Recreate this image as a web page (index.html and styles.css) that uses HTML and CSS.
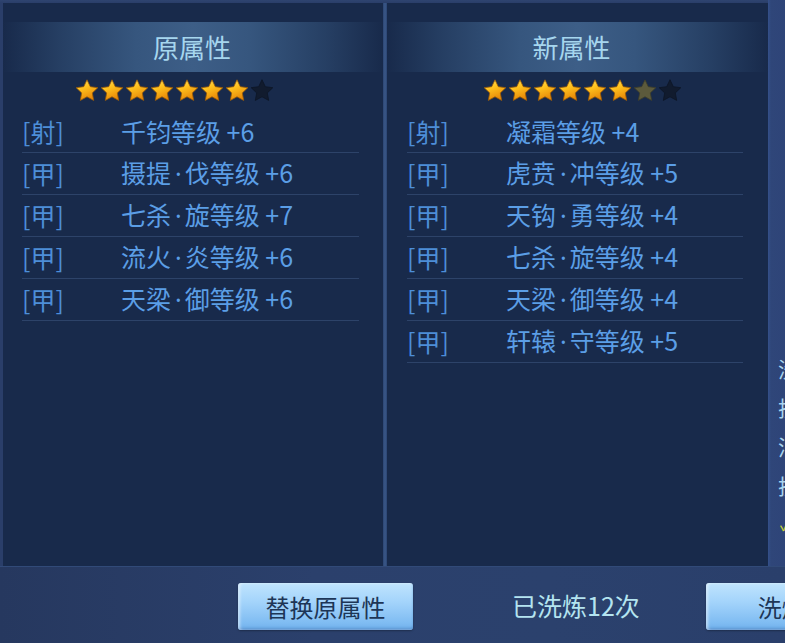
FILE: index.html
```html
<!DOCTYPE html>
<html lang="zh">
<head>
<meta charset="utf-8">
<link rel="stylesheet" href="styles.css">
</head>
<body>
<svg class="defs" width="0" height="0" aria-hidden="true">
  <defs>
    <linearGradient id="gold" x1="0" y1="0" x2="0.4" y2="1">
      <stop offset="0" stop-color="#ffe36a"/>
      <stop offset="0.45" stop-color="#ffc21e"/>
      <stop offset="1" stop-color="#e88a08"/>
    </linearGradient>
    <symbol id="star" viewBox="0 0 24 24">
      <path d="M12 0.8l3.3 6.9 7.5 1-5.5 5.2 1.4 7.5L12 17.8l-6.7 3.6 1.4-7.5L1.2 8.7l7.5-1z"/>
    </symbol>
  </defs>
</svg>
<div class="screen">
  <div class="top">
    <section class="panel panel-old">
      <div class="head"><span class="title">原属性</span></div>
      <div class="stars">
        <svg class="star gold"><use href="#star"/></svg>
        <svg class="star gold"><use href="#star"/></svg>
        <svg class="star gold"><use href="#star"/></svg>
        <svg class="star gold"><use href="#star"/></svg>
        <svg class="star gold"><use href="#star"/></svg>
        <svg class="star gold"><use href="#star"/></svg>
        <svg class="star gold"><use href="#star"/></svg>
        <svg class="star empty"><use href="#star"/></svg>
      </div>
      <ul class="rows">
        <li class="row"><span class="tag">[射]</span><span class="name">千钧等级 +6</span></li>
        <li class="row"><span class="tag">[甲]</span><span class="name">摄提<span class="dot">·</span>伐等级 +6</span></li>
        <li class="row"><span class="tag">[甲]</span><span class="name">七杀<span class="dot">·</span>旋等级 +7</span></li>
        <li class="row"><span class="tag">[甲]</span><span class="name">流火<span class="dot">·</span>炎等级 +6</span></li>
        <li class="row"><span class="tag">[甲]</span><span class="name">天梁<span class="dot">·</span>御等级 +6</span></li>
      </ul>
    </section>
    <div class="divider"></div>
    <section class="panel panel-new">
      <div class="head"><span class="title">新属性</span></div>
      <div class="stars">
        <svg class="star gold"><use href="#star"/></svg>
        <svg class="star gold"><use href="#star"/></svg>
        <svg class="star gold"><use href="#star"/></svg>
        <svg class="star gold"><use href="#star"/></svg>
        <svg class="star gold"><use href="#star"/></svg>
        <svg class="star gold"><use href="#star"/></svg>
        <svg class="star dim"><use href="#star"/></svg>
        <svg class="star empty"><use href="#star"/></svg>
      </div>
      <ul class="rows">
        <li class="row"><span class="tag">[射]</span><span class="name">凝霜等级 +4</span></li>
        <li class="row"><span class="tag">[甲]</span><span class="name">虎贲<span class="dot">·</span>冲等级 +5</span></li>
        <li class="row"><span class="tag">[甲]</span><span class="name">天钩<span class="dot">·</span>勇等级 +4</span></li>
        <li class="row"><span class="tag">[甲]</span><span class="name">七杀<span class="dot">·</span>旋等级 +4</span></li>
        <li class="row"><span class="tag">[甲]</span><span class="name">天梁<span class="dot">·</span>御等级 +4</span></li>
        <li class="row"><span class="tag">[甲]</span><span class="name">轩辕<span class="dot">·</span>守等级 +5</span></li>
      </ul>
    </section>
    <aside class="side">
      <p class="side-line">洗炼可改变属性</p>
      <p class="side-line">技能等级随机</p>
      <p class="side-line">消耗洗炼石</p>
      <p class="side-line">技能替换生效</p>
      <p class="side-line check">✓</p>
    </aside>
  </div>
  <div class="bottom">
    <button class="btn btn-replace">替换原属性</button>
    <span class="count">已洗炼12次</span>
    <button class="btn btn-wash">洗炼属性</button>
  </div>
</div>
</body>
</html>
```

FILE: styles.css
```css
* { box-sizing: border-box; }
html, body { margin: 0; padding: 0; }
body {
  width: 785px;
  height: 643px;
  overflow: hidden;
  background: #2a3e69;
  font-family: "Noto Sans CJK SC", "Noto Sans", sans-serif;
}
.defs { position: absolute; width: 0; height: 0; }
.screen {
  width: 785px;
  height: 643px;
  display: flex;
  flex-direction: column;
  background: #2a3e69;
  overflow: hidden;
}
.top {
  height: 566px;
  display: flex;
  padding: 3px 0 0 3px;
  background: linear-gradient(180deg, #2e4470 0, #2a3e69 3px);
}
.panel {
  height: 563px;
  background: #182a4b;
  display: flex;
  flex-direction: column;
}
.panel-old { width: 380px; }
.panel-new { width: 381px; }
.divider {
  width: 4px;
  height: 563px;
  background: linear-gradient(90deg, #2c4573, #3a5888 50%, #2c4573);
}
.head {
  margin-top: 19px;
  height: 50px;
  display: flex;
  align-items: center;
  justify-content: center;
  background: linear-gradient(90deg, rgba(40,66,104,0) 0%, rgba(44,72,110,0.7) 15%, #36567e 35%, #3d5e87 50%, #36567e 65%, rgba(44,72,110,0.7) 85%, rgba(40,66,104,0) 100%);
}
.title {
  font-size: 26px;
  color: #a6d6ee;
  line-height: 1;
}
.panel-old .title { margin-left: -2px; }
.panel-new .title { margin-left: -12px; }
.stars {
  margin-top: 7px;
  height: 24px;
  display: flex;
  gap: 1px;
}
.panel-old .stars { padding-left: 72px; }
.panel-new .stars { padding-left: 96px; }
.star {
  width: 24px;
  height: 24px;
  flex: none;
}
.star.gold { fill: url(#gold); stroke: #9a5a06; stroke-width: 0.8; }
.star.dim { fill: #5c5a3c; stroke: #3e3e2a; stroke-width: 0.8; }
.star.empty { fill: #111b2e; stroke: #0d1526; stroke-width: 0.8; }
.rows {
  list-style: none;
  margin: 8px 0 0 0;
  padding: 0 24px 0 19px;
}
.panel-new .rows { padding: 0 25px 0 20px; }
.row {
  height: 42px;
  display: flex;
  align-items: center;
  border-bottom: 1px solid #2d4369;
  padding-bottom: 1px;
}
.tag {
  width: 99px;
  font-size: 25px;
  color: #4d8ed8;
  line-height: 1;
}
.name {
  font-size: 25px;
  color: #5b9ee6;
  line-height: 1;
  white-space: nowrap;
}
.dot {
  font-family: "Noto Sans", sans-serif;
  margin: 0 3px 0 4px;
}
.side {
  flex: 1;
  margin-top: -3px;
  height: 566px;
  background: linear-gradient(90deg, #34508a 0, #2f4679 3px, #2e4478);
  overflow: hidden;
  padding: 358px 0 0 10px;
}
.side-line {
  margin: 0 0 18px 0;
  font-size: 21px;
  line-height: 21px;
  color: #a9d4ee;
  white-space: nowrap;
}
.side-line.check { color: #c8d23a; font-size: 16px; margin-left: 2px; }
.bottom {
  height: 77px;
  display: flex;
  align-items: center;
  padding-left: 238px;
  overflow: hidden;
  background: linear-gradient(90deg, #26385f 0, #2b406c 40%, #2b416d 70%, #2a3f6b);
  border-top: 1px solid #314a78;
}
.btn {
  flex: none;
  height: 47px;
  border: none;
  border-radius: 3px;
  padding: 0;
  font-family: "Noto Sans CJK SC", "Noto Sans", sans-serif;
  font-size: 24px;
  color: #1d3556;
  background: linear-gradient(180deg, #bfe4fd 0, #a4d4fb 40%, #7fbcf2 85%, #6eaeea 100%);
  box-shadow: inset 2px 0 3px rgba(255,255,255,0.55), inset 0 -2px 2px rgba(60,120,190,0.6), 0 1px 2px rgba(0,0,0,0.3);
  white-space: nowrap;
  overflow: hidden;
}
.btn-replace { width: 175px; margin-top: 2px; }
.count {
  flex: none;
  margin-left: 99px;
  font-size: 25px;
  color: #b4e4f0;
  line-height: 1;
  white-space: nowrap;
}
.btn-wash {
  width: 175px;
  margin-top: 2px;
  margin-left: 66px;
  text-align: left;
  padding-left: 52px;
}
```
